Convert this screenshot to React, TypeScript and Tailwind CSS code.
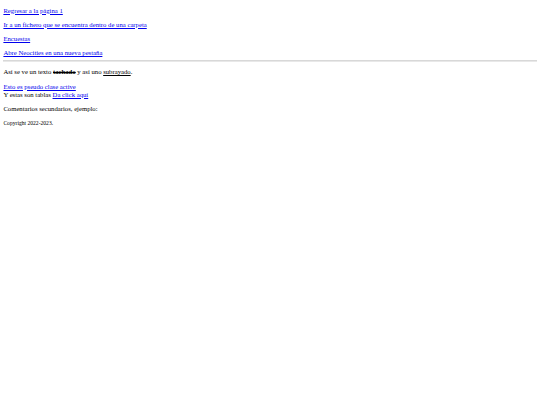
export default function App() {
  const link = 'text-[#0000EE] underline decoration-[#0000EE]';
  return (
    <div className="px-[3.4px] text-[6.7px] leading-[7.8px] text-black bg-white min-h-[405px]" style={{ fontFamily: '"Liberation Serif", "Times New Roman", serif' }}>
      <p className="my-[6.5px]"><a href="#" className={link}>Regresar a la página 1</a></p>
      <p className="my-[6.5px]"><a href="#" className={link}>Ir a un fichero que se encuentra dentro de una carpeta</a></p>
      <p className="my-[6.5px]"><a href="#" className={link}>Encuestas</a></p>
      <a href="#" className={link}>Abre Neocities en una nueva pestaña</a>
      <hr className="my-[3.3px] border-t border-[#d8d8d8] h-[1.5px] bg-[#e8e8e8]" />
      <p className="my-[6.5px]">
        Así se ve un texto <b className="line-through">tachado</b> y así uno <span className="underline">subrayado</span>.
      </p>
      <p className="my-[6.5px]">
        <a href="#" className={link}>Esto es pseudo clase active</a>
        <br />
        Y estas son tablas <a href="#" className={link}>Da click aquí</a>
      </p>
      <p className="my-[6.5px]">Comentarios secundarios, ejemplo:</p>
      <p className="mt-[7.5px] mb-[6.5px] text-[5.6px]">Copyright 2022-2023.</p>
    </div>
  );
}
